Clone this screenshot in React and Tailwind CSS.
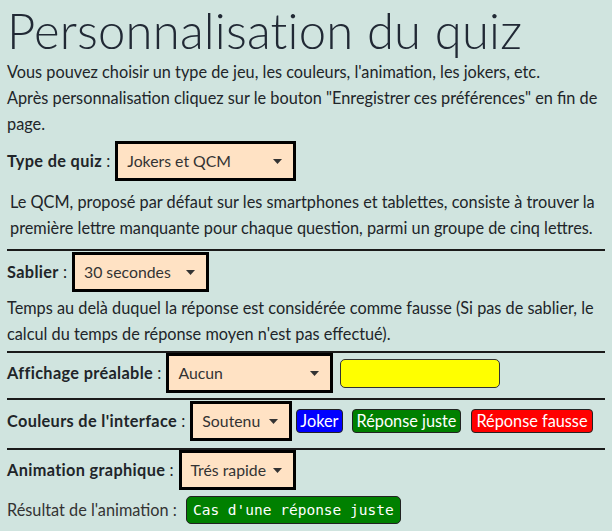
import React from "react";

function Caret() {
  return (
    <svg width="9" height="5" viewBox="0 0 9 5" className="shrink-0 ml-[4px]">
      <path d="M0 0 H9 L4.5 5 Z" fill="#333" />
    </svg>
  );
}

function Select({ value, w }) {
  return (
    <div
      className={`h-[40px] ${w} border-[3px] border-black bg-[#ffe2c4] flex items-center justify-between pl-[9px] pr-[11px] text-[15.8px] text-[#333] shrink-0`}
    >
      <span className="whitespace-nowrap">{value}</span>
      <Caret />
    </div>
  );
}

function Label({ children }) {
  return (
    <span className="whitespace-nowrap mr-[5px]">
      <b className="font-bold tracking-[0.35px]">{children}</b> :
    </span>
  );
}

export default function App() {
  return (
    <div
      className="w-[612px] h-[531px] overflow-hidden bg-[#d0e4df] text-[#212529] text-[16.3px] leading-[26px] px-[7px]"
      style={{ fontFamily: "Lato, 'Open Sans', sans-serif" }}
    >
      <h1 className="text-[49px] font-light leading-[56px] text-[#212935] pt-[2px] tracking-[0.2px]">
        Personnalisation du quiz
      </h1>
      <p className="mt-[1px]">
        Vous pouvez choisir un type de jeu, les couleurs, l'animation, les jokers, etc.
      </p>
      <p>
        Après personnalisation cliquez sur le bouton "Enregistrer ces préférences" en fin de
        <br />
        page.
      </p>

      <div className="flex items-center mt-[4px]">
        <Label>Type de quiz</Label>
        <Select value="Jokers et QCM" w="w-[181px]" />
      </div>
      <p className="pl-[3px] mt-[8px]">
        Le QCM, proposé par défaut sur les smartphones et tablettes, consiste à trouver la
        <br />
        première lettre manquante pour chaque question, parmi un groupe de cinq lettres.
      </p>
      <div className="h-[2px] bg-[#1a1a1a] mt-[8px]" />

      <div className="flex items-center mt-[1px]">
        <Label>Sablier</Label>
        <Select value="30 secondes" w="w-[137px]" />
      </div>
      <p className="mt-[3px]">
        Temps au delà duquel la réponse est considérée comme fausse (Si pas de sablier, le
        <br />
        calcul du temps de réponse moyen n'est pas effectué).
      </p>
      <div className="h-[2px] bg-[#1a1a1a] mt-[4px]" />

      <div className="flex items-center mt-[0px]">
        <Label>Affichage préalable</Label>
        <Select value="Aucun" w="w-[167px]" />
        <div className="ml-[7px] w-[160px] h-[29px] bg-[#ffff00] border border-[#333] rounded-[5px]" />
      </div>
      <div className="h-[2px] bg-[#1a1a1a] mt-[5px]" />

      <div className="flex items-center mt-[1px]">
        <Label>Couleurs de l'interface</Label>
        <Select value="Soutenu" w="w-[102px]" />
        <span className="ml-[4px] px-[3px] leading-[22px] bg-[#0000ff] text-white border border-[#222] rounded-[4px]">
          Joker
        </span>
        <span className="ml-[9px] px-[4px] leading-[22px] bg-[#008000] text-white border border-[#222] rounded-[4px]">
          Réponse juste
        </span>
        <span className="ml-[10px] px-[4px] leading-[22px] bg-[#ff0000] text-white border border-[#222] rounded-[4px]">
          Réponse fausse
        </span>
      </div>
      <div className="h-[2px] bg-[#1a1a1a] mt-[7px]" />

      <div className="flex items-center mt-[0px]">
        <Label>Animation graphique</Label>
        <Select value="Trés rapide" w="w-[117px]" />
      </div>
      <div className="flex items-center mt-[6px] text-[#333]">
        <span className="whitespace-nowrap mr-[9px]">Résultat de l'animation :</span>
        <span
          className="px-[6px] leading-[26px] bg-[#008000] text-white border border-[#222] rounded-[5px] text-[14.5px]"
          style={{ fontFamily: "'DejaVu Sans Mono', monospace" }}
        >
          Cas d'une réponse juste
        </span>
      </div>
    </div>
  );
}
